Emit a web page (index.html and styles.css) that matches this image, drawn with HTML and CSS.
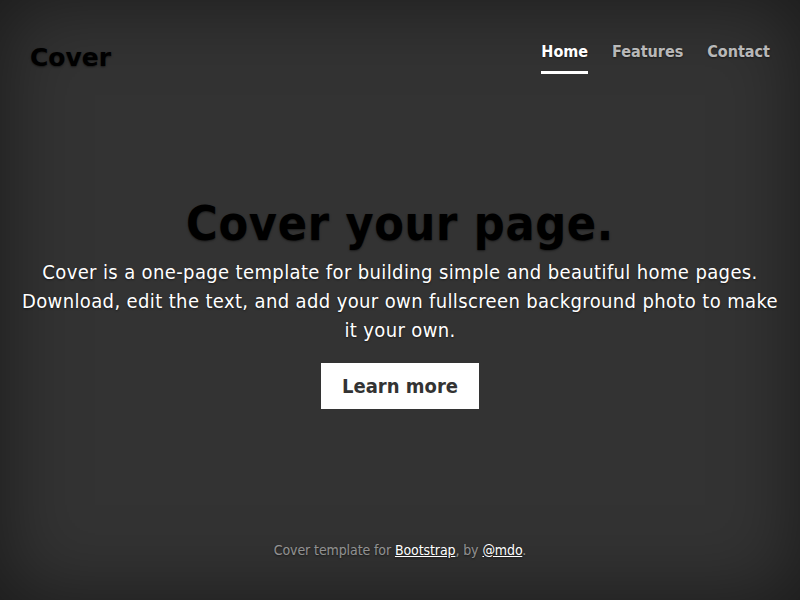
FILE: index.html
```html
<!DOCTYPE html>
<html lang="en">
<head>
<meta charset="utf-8">
<title>Cover</title>
<link rel="stylesheet" href="styles.css">
</head>
<body>
<div class="cover">
  <header class="masthead">
    <h3 class="brand">Cover</h3>
    <nav class="nav">
      <a class="nav-link active" href="#">Home</a>
      <a class="nav-link" href="#">Features</a>
      <a class="nav-link" href="#">Contact</a>
    </nav>
  </header>
  <main class="inner">
    <h1 class="heading">Cover your page.</h1>
    <p class="lead">Cover is a one-page template for building simple and beautiful home pages. Download, edit the text, and add your own fullscreen background photo to make it your own.</p>
    <a class="btn" href="#">Learn more</a>
  </main>
  <footer class="mastfoot">
    <p>Cover template for <a href="#">Bootstrap</a>, by <a href="#">@mdo</a>.</p>
  </footer>
</div>
</body>
</html>
```

FILE: styles.css
```css
html, body {
  margin: 0;
  height: 100%;
}
body {
  background: #333;
  color: #fff;
  font-family: "DejaVu Sans Condensed", "DejaVu Sans", sans-serif;
  font-stretch: condensed;
  box-shadow: inset 0 0 80px rgba(0,0,0,.5);
  text-shadow: 0 1px 2px rgba(0,0,0,.5);
}
.cover {
  height: 100%;
  display: flex;
  flex-direction: column;
  box-sizing: border-box;
  padding: 0 10px;
}
.masthead {
  display: flex;
  justify-content: space-between;
  align-items: flex-start;
  padding: 38px 20px 0 20px;
}
.brand {
  margin: 0;
  font-family: "DejaVu Sans", sans-serif;
  font-stretch: normal;
  font-size: 25px;
  font-weight: bold;
  color: #000;
  line-height: 40px;
}
.nav {
  display: flex;
  gap: 24px;
  padding-top: 1px;
}
.nav-link {
  font-size: 16px;
  font-weight: bold;
  color: rgba(255,255,255,.7);
  text-decoration: none;
  line-height: 26px;
  padding: 0 0 6px;
  border-bottom: 3px solid transparent;
}
.nav-link.active {
  color: #fff;
  border-bottom-color: #fff;
}
.inner {
  flex: 1;
  display: flex;
  flex-direction: column;
  justify-content: center;
  align-items: center;
  text-align: center;
  padding-bottom: 17px;
}
.heading {
  margin: 0 0 6px;
  font-size: 48px;
  font-weight: bold;
  letter-spacing: 0.7px;
  color: #000;
  line-height: 58px;
}
.lead {
  margin: 0 0 18px;
  max-width: 768px;
  font-size: 20px;
  letter-spacing: 0.37px;
  line-height: 29px;
}
.btn {
  background: #fff;
  color: #333;
  text-shadow: none;
  font-size: 20px;
  font-weight: bold;
  text-decoration: none;
  padding: 10px 21px;
  line-height: 26px;
}
.mastfoot {
  text-align: center;
  color: rgba(255,255,255,.5);
  font-size: 14px;
  letter-spacing: -0.1px;
  padding-bottom: 42px;
}
.mastfoot p { margin: 0; }
.mastfoot a { color: #fff; }
```
